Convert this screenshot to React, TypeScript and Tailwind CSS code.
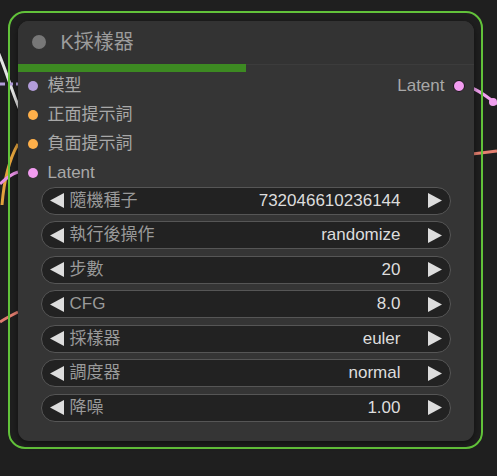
const FONT = '"Liberation Sans", "Noto Sans CJK TC", sans-serif'

const inputs = [
  { name: '模型', color: 'bg-[#b39ddb]' },
  { name: '正面提示詞', color: 'bg-[#ffb04a]' },
  { name: '負面提示詞', color: 'bg-[#ffb04a]' },
  { name: 'Latent', color: 'bg-[#f29cf0]' },
]

const widgets = [
  { label: '隨機種子', value: '732046610236144' },
  { label: '執行後操作', value: 'randomize' },
  { label: '步數', value: '20' },
  { label: 'CFG', value: '8.0' },
  { label: '採樣器', value: 'euler' },
  { label: '調度器', value: 'normal' },
  { label: '降噪', value: '1.00' },
]

function Arrow({ dir }: { dir: 'left' | 'right' }) {
  return (
    <svg width="14" height="15" viewBox="0 0 14 15" className="shrink-0">
      {dir === 'left' ? (
        <polygon points="14,0 14,15 0,7.5" fill="#dddddd" />
      ) : (
        <polygon points="0,0 0,15 14,7.5" fill="#dddddd" />
      )}
    </svg>
  )
}

// wires behind the node
function Wires() {
  return (
    <svg className="absolute inset-0" width="497" height="476">
      <path d="M-2 52 C 6 70, 12 92, 20 110" stroke="#1a1a1a" strokeWidth="5" fill="none" />
      <path d="M-2 52 C 6 70, 12 92, 20 110" stroke="#e4e4e4" strokeWidth="3" fill="none" />
      <line x1="0" y1="84" x2="18" y2="84" stroke="#b39ddb" strokeWidth="3" strokeDasharray="5 3" />
      <path d="M2 205 C 4 180, 10 158, 18 144" stroke="#e3a33c" strokeWidth="3" fill="none" />
      <path d="M0 184 C 6 178, 12 174, 18 172" stroke="#e58fe3" strokeWidth="3" fill="none" />
      <path d="M0 322 C 6 318, 12 315, 18 312" stroke="#e07c6e" strokeWidth="3" fill="none" />
      <path d="M472 88 C 482 92, 488 98, 497 104" stroke="#f0a0ee" strokeWidth="3" fill="none" />
      <circle cx="493" cy="102" r="4" fill="#f0a0ee" />
      <path d="M472 154 C 482 153, 490 152, 497 151" stroke="#e58070" strokeWidth="3" fill="none" />
    </svg>
  )
}

export default function App() {
  return (
    <div
      className="relative h-[476px] w-[497px] overflow-hidden bg-[#1f1f1f]"
      style={{ fontFamily: FONT }}
    >
      <Wires />

      <div className="relative pl-[8px] pt-[11px]">
        {/* selection outline */}
        <div className="h-[438px] w-[475px] rounded-[17px] border-2 border-[#62c23a] p-[7.5px]">
          {/* node body */}
          <div className="h-[420px] w-[456px] overflow-hidden rounded-[11px] bg-[#353535] shadow-[0_2px_6px_rgba(0,0,0,0.5)]">
            {/* title */}
            <div className="flex h-[44px] items-center border-b border-[#3c3c3c] bg-[#333333] pl-[14px]">
              <div className="h-[14px] w-[14px] rounded-full bg-[#777777]" />
              <span className="ml-[15px] text-[20px] text-[#9c9c9c]">K採樣器</span>
            </div>
            <div className="-mt-[1px] h-[8px] w-[228px] bg-[#3d8a22]" />

            {/* slots */}
            <div className="relative">
              {inputs.map((s) => (
                <div key={s.name} className="flex h-[29px] items-center pl-[10px]">
                  <div className={`h-[10px] w-[10px] rounded-full ${s.color}`} />
                  <span className="ml-[10px] text-[17px] text-[#a8a8a8]">{s.name}</span>
                </div>
              ))}
              <div className="absolute right-[9px] top-0 flex h-[29px] items-center">
                <span className="text-[17px] text-[#a8a8a8]">Latent</span>
                <div className="ml-[8px] h-[12px] w-[12px] rounded-full border-[1.5px] border-[#151515] bg-[#f29cf0]" />
              </div>
            </div>

            {/* widgets */}
            <div className="-mt-[1px] flex flex-col gap-[6.5px] px-[23px]">
              {widgets.map((w) => (
                <div
                  key={w.label}
                  className="flex h-[28px] items-center rounded-full border-[1.5px] border-[#565656] bg-[#222222] pl-[8px] pr-[8px]"
                >
                  <Arrow dir="left" />
                  <span className="ml-[6px] text-[17px] text-[#9a9a9a]">{w.label}</span>
                  <span className="ml-auto mr-[27px] text-[17px] text-[#dddddd]">{w.value}</span>
                  <Arrow dir="right" />
                </div>
              ))}
            </div>
          </div>
        </div>
      </div>
    </div>
  )
}
